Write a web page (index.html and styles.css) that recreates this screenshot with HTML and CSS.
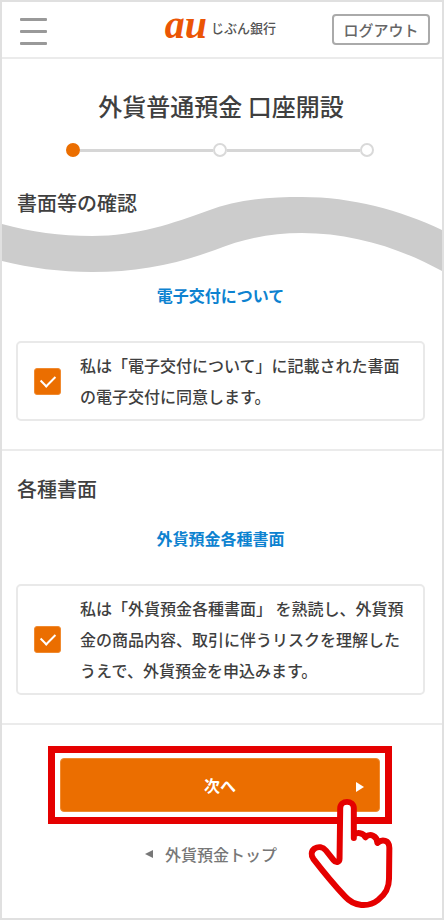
FILE: index.html
```
<!DOCTYPE html>
<html lang="ja">
<head>
  <meta charset="UTF-8" />
  <meta name="viewport" content="width=device-width, initial-scale=1" />
  <title>外貨普通預金 口座開設</title>
  <link rel="stylesheet" href="styles.css">
</head>
<body>
  <header class="header">
    <button type="button" class="menu" aria-label="メニュー"><span></span><span></span><span></span></button>
    <a href="#" class="logo"><span class="logo-au">au</span><span class="logo-name">じぶん銀行</span></a>
    <button type="button" class="logout">ログアウト</button>
  </header>
  <main>
    <h1 class="title">外貨普通預金 口座開設</h1>
    <div class="steps">
      <span class="dot dot-on"></span><span class="bar"></span><span class="dot"></span><span class="bar"></span><span class="dot"></span>
    </div>

    <section class="section section-cut">
      <h2>書面等の確認</h2>
      <svg class="wave" viewBox="0 0 440 76" preserveAspectRatio="none" aria-hidden="true">
        <path fill="#ccc" d="M0 28C29 36 58 40 90 40C135 40 172 27 205 15C236 3 268 1 300 1C350 1 398 14 440 34V75C398 52 350 37 300 37C268 37 240 43 213 54C172 69 135 76 90 76C58 76 29 72 0 65Z"/>
      </svg>
      <a href="#" class="doc-link">電子交付について</a>
      <label class="agree">
        <input type="checkbox" checked>
        <span>私は「電子交付について」に記載された書面の電子交付に同意します。</span>
      </label>
    </section>

    <section class="section">
      <h2>各種書面</h2>
      <a href="#" class="doc-link">外貨預金各種書面</a>
      <label class="agree">
        <input type="checkbox" checked>
        <span>私は「外貨預金各種書面」 を熟読し、外貨預金の商品内容、取引に伴うリスクを理解したうえで、外貨預金を申込みます。</span>
      </label>
    </section>

    <div class="highlight">
      <button type="button" class="next">次へ
        <svg class="next-arrow" viewBox="0 0 8 10" aria-hidden="true"><path fill="#fff" d="M0 0L8 5L0 10Z"/></svg>
      </button>
      <svg class="hand" viewBox="190 200 262 338" aria-hidden="true">
        <path fill="#fff" stroke="#e50000" stroke-width="18" stroke-linejoin="round" stroke-linecap="round" d="M331 322V233C331 207 290 207 290 233L288 385C288 396 277 398 270 389L247 360C238 349 224 347 213 354C202 362 202 375 209 385C240 425 275 467 305 499C332 529 375 532 404 509C428 490 437 472 437 445L438 352C438 328 416 325 402 337C401 315 380 307 366 320C360 306 340 304 331 313Z"/>
      </svg>
    </div>
    <a href="#" class="back"><svg viewBox="0 0 8 8" aria-hidden="true"><path fill="#777" d="M8 0V8L0 4Z"/></svg>外貨預金トップ</a>
  </main>
</body>
</html>
```
FILE: styles.css
```
* {
  box-sizing: border-box;
}
body {
  margin: 0;
  min-height: 100vh;
  border: 2px solid #e0e0e0;
  background: #fff;
  color: #3f3f3f;
  font-family: "Noto Sans CJK JP", sans-serif;
  font-size: 16px;
  font-weight: 500;
}
a {
  text-decoration: none;
}
button {
  font: inherit;
  cursor: pointer;
}
.header {
  display: flex;
  align-items: center;
  justify-content: space-between;
  height: 57px;
  padding: 0 12px 0 18px;
  border-bottom: 2px solid #ebebeb;
}
.menu {
  display: flex;
  flex-direction: column;
  gap: 9px;
  width: 27px;
  padding: 4px 0 0;
  border: 0;
  background: none;
}
.menu span {
  height: 3px;
  border-radius: 1px;
  background: #999;
}
.logo {
  display: flex;
  align-items: center;
  gap: 4px;
  margin-left: 62px;
  color: #555;
}
.logo-au {
  color: #eb5505;
  font: italic bold 40px/40px "Liberation Serif", serif;
  padding-bottom: 10px;
}
.logo-name {
  padding-bottom: 4px;
  font-size: 13px;
  line-height: 20px;
}
.logout {
  width: 98px;
  height: 31px;
  padding: 0;
  border: 2px solid #aaa;
  border-radius: 4px;
  background: #fff;
  color: #666;
  font-size: 15px;
  line-height: 24px;
}
.title {
  margin: 29px 2px 0 0;
  text-align: center;
  font-size: 24px;
  font-weight: 500;
  line-height: 36px;
}
.steps {
  display: flex;
  align-items: center;
  margin: 19px 68px 0 64px;
}
.dot {
  width: 14px;
  height: 14px;
  border: 2px solid #d9d9d9;
  border-radius: 50%;
  background: #fff;
}
.dot-on {
  border-color: #eb6e00;
  background: #eb6e00;
}
.bar {
  flex: 1;
  height: 3px;
  background: #d6d6d6;
}
.section {
  position: relative;
  padding: 23px 17px 28px 14px;
  border-bottom: 2px solid #ebebeb;
}
.section h2 {
  margin: 0;
  padding-left: 1px;
  font-size: 20px;
  font-weight: 500;
  line-height: 30px;
}
.doc-link {
  display: block;
  margin: 22px 0 34px;
  color: #0d82d0;
  text-align: center;
  font-weight: 700;
  line-height: 24px;
}
.section-cut {
  padding-top: 31px;
}
.section-cut .doc-link {
  margin: 65px 0 34px;
}
.wave {
  position: absolute;
  top: 39px;
  left: 0;
  width: 100%;
  height: 76px;
}
.agree {
  display: flex;
  align-items: center;
  gap: 19px;
  padding: 7px 12px 7px 16px;
  border: 2px solid #e9e9e9;
  border-radius: 5px;
  line-height: 31px;
}
.agree input {
  appearance: none;
  display: grid;
  place-items: center;
  flex: none;
  width: 27px;
  height: 27px;
  margin: 0;
  border: 1px solid #f08a30;
  border-radius: 3px;
  background: #fff;
}
.agree input:checked {
  background: #eb6e00;
}
.agree input:checked::before {
  content: "";
  width: 12px;
  height: 7px;
  margin-bottom: 4px;
  border: solid #fff;
  border-width: 0 0 2px 2px;
  transform: rotate(-45deg);
}
.highlight {
  position: relative;
  margin: 21px 50px 0 46px;
  padding: 5px;
  border: 7px solid #e50000;
}
.next {
  display: block;
  position: relative;
  width: 100%;
  height: 54px;
  border: 1px solid #f08a30;
  border-radius: 4px;
  background: #eb6e00;
  color: #fff;
  font-weight: 700;
}
.next-arrow {
  position: absolute;
  top: 23px;
  right: 15px;
  width: 8px;
  height: 10px;
}
.hand {
  position: absolute;
  top: 44px;
  right: -9px;
  width: 87px;
  height: 113px;
}
.back {
  display: flex;
  align-items: center;
  justify-content: center;
  gap: 12px;
  width: fit-content;
  margin: 18px auto 0;
  padding-right: 22px;
  color: #777;
  line-height: 24px;
}
.back svg {
  width: 8px;
  height: 8px;
}
```
